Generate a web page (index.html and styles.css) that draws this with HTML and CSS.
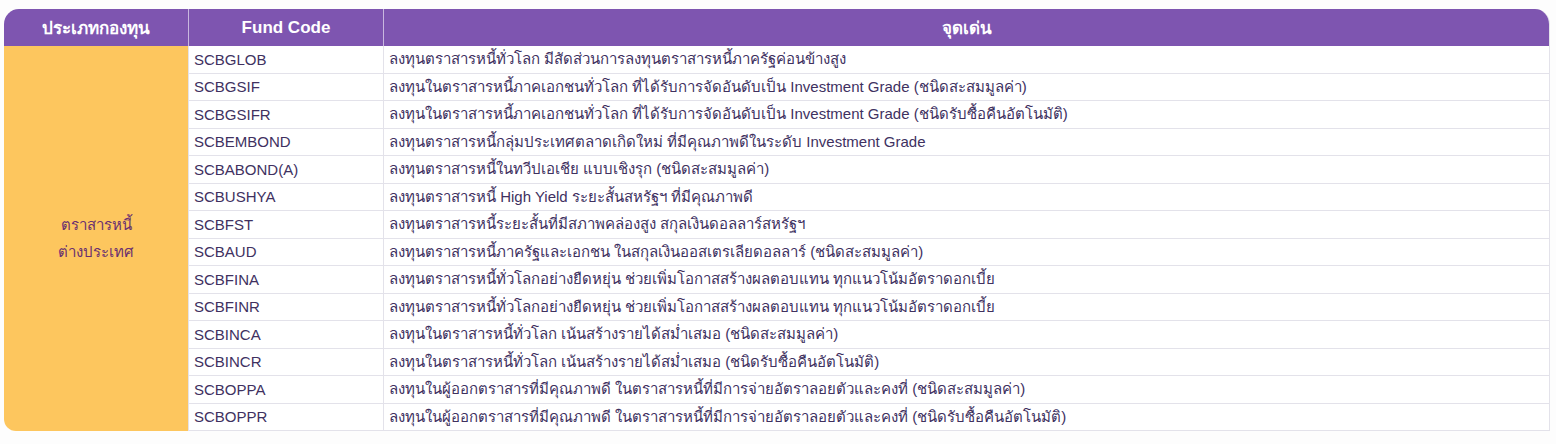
FILE: index.html
```html
<!DOCTYPE html>
<html lang="th">
  <head>
    <meta charset="UTF-8" />
    <meta name="viewport" content="width=device-width, initial-scale=1.0" />
    <title>กองทุนตราสารหนี้ต่างประเทศ</title>
    <link rel="stylesheet" href="styles.css">
  </head>
  <body>
    <div class="fund-table-wrap">
      <table class="fund-table">
        <thead>
          <tr>
            <th class="col-type">ประเภทกองทุน</th>
            <th class="col-code">Fund Code</th>
            <th class="col-desc">จุดเด่น</th>
          </tr>
        </thead>
        <tbody>
          <tr>
            <td class="type-cell" rowspan="14">ตราสารหนี้<br />ต่างประเทศ</td>
            <td class="code-cell">SCBGLOB</td>
            <td class="desc-cell">ลงทุนตราสารหนี้ทั่วโลก มีสัดส่วนการลงทุนตราสารหนี้ภาครัฐค่อนข้างสูง</td>
          </tr>
          <tr>
            <td class="code-cell">SCBGSIF</td>
            <td class="desc-cell">ลงทุนในตราสารหนี้ภาคเอกชนทั่วโลก ที่ได้รับการจัดอันดับเป็น Investment Grade (ชนิดสะสมมูลค่า)</td>
          </tr>
          <tr>
            <td class="code-cell">SCBGSIFR</td>
            <td class="desc-cell">ลงทุนในตราสารหนี้ภาคเอกชนทั่วโลก ที่ได้รับการจัดอันดับเป็น Investment Grade (ชนิดรับซื้อคืนอัตโนมัติ)</td>
          </tr>
          <tr>
            <td class="code-cell">SCBEMBOND</td>
            <td class="desc-cell">ลงทุนตราสารหนี้กลุ่มประเทศตลาดเกิดใหม่ ที่มีคุณภาพดีในระดับ Investment Grade</td>
          </tr>
          <tr>
            <td class="code-cell">SCBABOND(A)</td>
            <td class="desc-cell">ลงทุนตราสารหนี้ในทวีปเอเชีย แบบเชิงรุก (ชนิดสะสมมูลค่า)</td>
          </tr>
          <tr>
            <td class="code-cell">SCBUSHYA</td>
            <td class="desc-cell">ลงทุนตราสารหนี้ High Yield ระยะสั้นสหรัฐฯ ที่มีคุณภาพดี</td>
          </tr>
          <tr>
            <td class="code-cell">SCBFST</td>
            <td class="desc-cell">ลงทุนตราสารหนี้ระยะสั้นที่มีสภาพคล่องสูง สกุลเงินดอลลาร์สหรัฐฯ</td>
          </tr>
          <tr>
            <td class="code-cell">SCBAUD</td>
            <td class="desc-cell">ลงทุนตราสารหนี้ภาครัฐและเอกชน ในสกุลเงินออสเตรเลียดอลลาร์ (ชนิดสะสมมูลค่า)</td>
          </tr>
          <tr>
            <td class="code-cell">SCBFINA</td>
            <td class="desc-cell">ลงทุนตราสารหนี้ทั่วโลกอย่างยืดหยุ่น ช่วยเพิ่มโอกาสสร้างผลตอบแทน ทุกแนวโน้มอัตราดอกเบี้ย</td>
          </tr>
          <tr>
            <td class="code-cell">SCBFINR</td>
            <td class="desc-cell">ลงทุนตราสารหนี้ทั่วโลกอย่างยืดหยุ่น ช่วยเพิ่มโอกาสสร้างผลตอบแทน ทุกแนวโน้มอัตราดอกเบี้ย</td>
          </tr>
          <tr>
            <td class="code-cell">SCBINCA</td>
            <td class="desc-cell">ลงทุนในตราสารหนี้ทั่วโลก เน้นสร้างรายได้สม่ำเสมอ (ชนิดสะสมมูลค่า)</td>
          </tr>
          <tr>
            <td class="code-cell">SCBINCR</td>
            <td class="desc-cell">ลงทุนในตราสารหนี้ทั่วโลก เน้นสร้างรายได้สม่ำเสมอ (ชนิดรับซื้อคืนอัตโนมัติ)</td>
          </tr>
          <tr>
            <td class="code-cell">SCBOPPA</td>
            <td class="desc-cell">ลงทุนในผู้ออกตราสารที่มีคุณภาพดี ในตราสารหนี้ที่มีการจ่ายอัตราลอยตัวและคงที่ (ชนิดสะสมมูลค่า)</td>
          </tr>
          <tr>
            <td class="code-cell">SCBOPPR</td>
            <td class="desc-cell">ลงทุนในผู้ออกตราสารที่มีคุณภาพดี ในตราสารหนี้ที่มีการจ่ายอัตราลอยตัวและคงที่ (ชนิดรับซื้อคืนอัตโนมัติ)</td>
          </tr>
        </tbody>
      </table>
    </div>
  </body>
</html>
```

FILE: styles.css
```css
html,
body {
  margin: 0;
  background: #fdfdfd;
  font-family: "Liberation Sans", "Noto Sans", sans-serif;
}
.fund-table-wrap {
  margin: 9px 6px 0 4px;
  border-radius: 15px 15px 0 12px;
  overflow: hidden;
  border-right: 1px solid #e3e2ea;
}
.fund-table {
  width: 100%;
  border-collapse: collapse;
  table-layout: fixed;
}
.fund-table th {
  height: 37px;
  padding: 0;
  background: #7e55b0;
  color: #fff;
  font-size: 17px;
  font-weight: bold;
  text-align: center;
  border-left: 1px solid #c9b8df;
}
.fund-table th:first-child {
  border-left: none;
}
.col-type {
  width: 184px;
}
.col-code {
  width: 194px;
}
.fund-table td {
  height: 26.5px;
  padding: 0 0 0 5px;
  font-size: 15px;
  color: #40315f;
  background: #fff;
  border-top: 1px solid #e3e2ea;
  border-left: 1px solid #e3e2ea;
  white-space: nowrap;
}
.fund-table tr:first-child td {
  border-top: none;
}
.fund-table td.type-cell {
  background: #fdc65e;
  border: none;
  padding: 0;
  text-align: center;
  color: #6a3070;
  font-size: 15px;
  line-height: 27px;
}
.desc-cell {
  padding-left: 6px;
}
.fund-table tr:last-child td {
  border-bottom: 1px solid #e3e2ea;
}
```
